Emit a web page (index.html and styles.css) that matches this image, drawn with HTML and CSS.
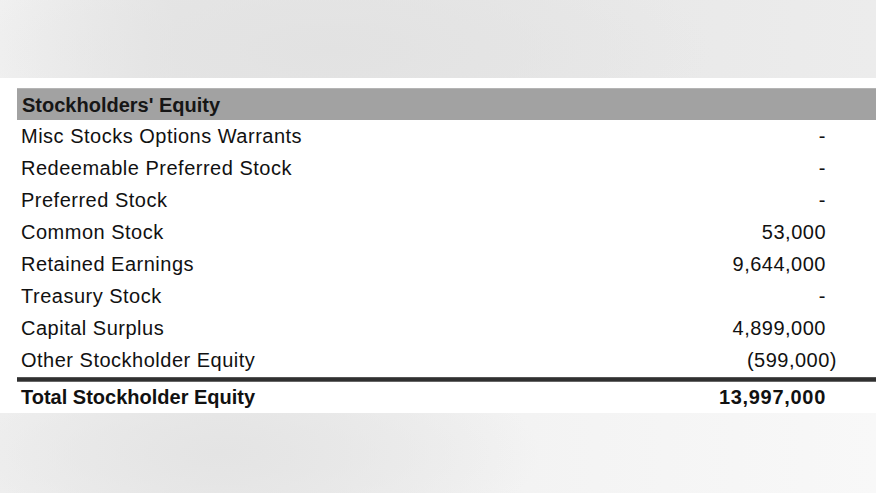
FILE: index.html
```html
<!DOCTYPE html>
<html lang="en">
<head>
<meta charset="utf-8">
<title>Stockholders' Equity</title>
<link rel="stylesheet" href="styles.css">
</head>
<body>
<div class="band band-top"></div>
<main class="panel">
  <div class="sheet">
    <div class="head">Stockholders' Equity</div>
    <div class="row"><span class="label">Misc Stocks Options Warrants</span><span class="val">-</span></div>
    <div class="row"><span class="label">Redeemable Preferred Stock</span><span class="val">-</span></div>
    <div class="row"><span class="label">Preferred Stock</span><span class="val">-</span></div>
    <div class="row"><span class="label">Common Stock</span><span class="val">53,000</span></div>
    <div class="row"><span class="label">Retained Earnings</span><span class="val">9,644,000</span></div>
    <div class="row"><span class="label">Treasury Stock</span><span class="val">-</span></div>
    <div class="row"><span class="label">Capital Surplus</span><span class="val">4,899,000</span></div>
    <div class="row"><span class="label">Other Stockholder Equity</span><span class="val neg">(599,000)</span></div>
    <div class="rule"></div>
    <div class="row total"><span class="label">Total Stockholder Equity</span><span class="val">13,997,000</span></div>
  </div>
</main>
<div class="band band-bottom"></div>
</body>
</html>
```

FILE: styles.css
```css
html, body {
  margin: 0;
  padding: 0;
}
body {
  width: 876px;
  height: 493px;
  overflow: hidden;
  background: #f2f2f2;
  font-family: "Liberation Sans", Arial, sans-serif;
  color: #111;
}
.band {
  width: 100%;
}
.band-top {
  height: 78px;
  background:
    radial-gradient(ellipse 380px 120px at 330px 50px, #e2e2e2 0%, rgba(226,226,226,0) 100%),
    linear-gradient(90deg, #f1f1f1 0%, #e6e6e6 20%, #e7e7e7 55%, #ececec 100%);
}
.band-bottom {
  height: 80px;
  background:
    radial-gradient(ellipse 320px 110px at 220px 40px, #e4e4e4 0%, rgba(228,228,228,0) 100%),
    linear-gradient(90deg, #f1f1f1 0%, #eaeaea 25%, #f3f3f3 60%, #f8f8f8 100%);
}
.panel {
  background: #fff;
  height: 335px;
  box-sizing: border-box;
  padding: 10px 0 0 17px;
}
.sheet {
  display: flex;
  flex-direction: column;
}
.head {
  height: 32px;
  line-height: 33px;
  background: #a2a2a2;
  border-top: 1px solid #b4b4b4;
  box-sizing: border-box;
  padding-left: 5px;
  font-weight: bold;
  font-size: 20px;
  color: #161616;
}
.row {
  height: 32px;
  display: flex;
  align-items: center;
  justify-content: space-between;
  padding: 0 50px 0 4px;
  font-size: 20px;
  letter-spacing: 0.5px;
}
.val {
  text-align: right;
}
.neg {
  margin-right: -11px;
}
.rule {
  height: 5px;
  margin-top: 1px;
  background: #303030;
  border-top: 1px solid #555;
  border-bottom: 1px solid #666;
  box-sizing: border-box;
}
.total {
  height: 31px;
  font-weight: bold;
  letter-spacing: 0;
}
.total .val {
  letter-spacing: 0.7px;
}
```
